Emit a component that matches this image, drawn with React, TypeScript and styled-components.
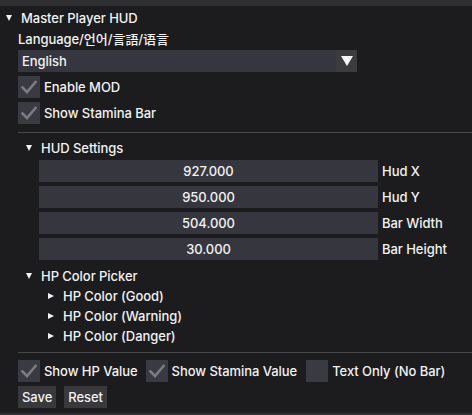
import React from 'react';
import styled, { createGlobalStyle } from 'styled-components';

const GlobalStyle = createGlobalStyle`
    html, body {
        margin: 0;
        padding: 0;
        background: #1c1c1e;
    }
    body {
        font-family: Inter, "Noto Sans CJK KR", "Noto Sans CJK JP", "Noto Sans CJK SC", sans-serif;
        font-size: 13px;
        font-weight: 500;
        letter-spacing: -0.05px;
        color: #f2f2f2;
    }
`;

const Window = styled.div`
    width: 472px;
    height: 415px;
    background: #1c1c1e;
    overflow: hidden;
    display: flex;
    flex-direction: column;
`;

const Strip = styled.div<{ $top?: boolean }>`
    height: ${p => (p.$top ? 6 : 3)}px;
    margin-top: ${p => (p.$top ? 0 : 5)}px;
    background: #2f2f32;
    flex-shrink: 0;
`;

const Body = styled.div`
    display: flex;
    flex-direction: column;
    padding-left: 18px;
`;

const TreeRow = styled.div<{ $indent: number; $top?: number }>`
    display: flex;
    align-items: center;
    height: 20px;
    margin-top: ${p => p.$top ?? 0}px;
    margin-left: ${p => p.$indent}px;
    gap: 9px;
    white-space: nowrap;
`;

const Arrow = styled.span<{ $open: boolean }>`
    width: 0;
    height: 0;
    flex-shrink: 0;
    ${p =>
        p.$open
            ? `border-left: 3.5px solid transparent;
               border-right: 3.5px solid transparent;
               border-top: 6px solid #f2f2f2;`
            : `border-top: 3.5px solid transparent;
               border-bottom: 3.5px solid transparent;
               border-left: 6px solid #f2f2f2;`}
`;

const TextLine = styled.div<{ $top?: number }>`
    height: 18px;
    line-height: 18px;
    margin-top: ${p => p.$top ?? 0}px;
    white-space: nowrap;
`;

const Combo = styled.div`
    width: 339px;
    height: 22px;
    margin-top: 2px;
    display: flex;
    background: #363640;
`;

const ComboText = styled.div`
    flex: 1;
    padding-left: 4px;
    line-height: 22px;
`;

const ComboButton = styled.div`
    width: 21px;
    display: flex;
    align-items: center;
    justify-content: center;
    background: #3c3c3f;
`;

const ComboArrow = styled.span`
    width: 0;
    height: 0;
    border-left: 6px solid transparent;
    border-right: 6px solid transparent;
    border-top: 10px solid #f5f5f5;
`;

const CheckRow = styled.div<{ $top: number }>`
    display: flex;
    align-items: center;
    margin-top: ${p => p.$top}px;
    height: 22px;
`;

const CheckItem = styled.div<{ $gapAfter?: number }>`
    display: flex;
    align-items: center;
    gap: 4px;
    margin-right: ${p => p.$gapAfter ?? 0}px;
    white-space: nowrap;
`;

const Box = styled.div`
    width: 22px;
    height: 22px;
    background: #3a3a42;
    display: flex;
    align-items: center;
    justify-content: center;
`;

const Separator = styled.div<{ $top: number }>`
    height: 1px;
    margin-top: ${p => p.$top}px;
    background: #48484b;
`;

const InputRow = styled.div<{ $top: number }>`
    display: flex;
    align-items: center;
    gap: 4px;
    margin-top: ${p => p.$top}px;
    margin-left: 21px;
    height: 22px;
`;

const NumberField = styled.div`
    width: 339px;
    height: 22px;
    line-height: 22px;
    text-align: center;
    background: #36363f;
`;

const ButtonRow = styled.div`
    display: flex;
    gap: 8px;
    margin-top: 4px;
`;

const Button = styled.div`
    height: 22px;
    line-height: 22px;
    padding: 0 4px;
    background: #38383d;
`;

const Check = () => (
    <svg width="22" height="22" viewBox="0 0 22 22">
        <path d="M4.5 11.5 L9 16 L17.5 6" fill="none" stroke="#7c7c82" strokeWidth="2.6" strokeLinecap="square" />
    </svg>
);

const Checkbox = ({ label, checked, gapAfter }: { label: string; checked: boolean; gapAfter?: number }) => (
    <CheckItem $gapAfter={gapAfter}>
        <Box>{checked && <Check />}</Box>
        <span>{label}</span>
    </CheckItem>
);

const fields = [
    { value: '927.000', label: 'Hud X' },
    { value: '950.000', label: 'Hud Y' },
    { value: '504.000', label: 'Bar Width' },
    { value: '30.000', label: 'Bar Height' },
];

const colors = ['HP Color (Good)', 'HP Color (Warning)', 'HP Color (Danger)'];

export default function App() {
    return (
        <>
            <GlobalStyle />
            <Window>
                <Strip $top />
                <Body>
                    <TreeRow $indent={-12} $top={2}>
                        <Arrow $open />
                        <span>Master Player HUD</span>
                    </TreeRow>
                    <TextLine $top={2}>Language/언어/言語/语言</TextLine>
                    <Combo>
                        <ComboText>English</ComboText>
                        <ComboButton>
                            <ComboArrow />
                        </ComboButton>
                    </Combo>
                    <CheckRow $top={4}>
                        <Checkbox label="Enable MOD" checked />
                    </CheckRow>
                    <CheckRow $top={4}>
                        <Checkbox label="Show Stamina Bar" checked />
                    </CheckRow>
                    <Separator $top={8} />
                    <TreeRow $indent={8} $top={5}>
                        <Arrow $open />
                        <span>HUD Settings</span>
                    </TreeRow>
                    {fields.map((f, i) => (
                        <InputRow key={f.label} $top={i === 0 ? 2 : 4}>
                            <NumberField>{f.value}</NumberField>
                            <span>{f.label}</span>
                        </InputRow>
                    ))}
                    <TreeRow $indent={8} $top={6}>
                        <Arrow $open />
                        <span>HP Color Picker</span>
                    </TreeRow>
                    {colors.map(c => (
                        <TreeRow key={c} $indent={30}>
                            <Arrow $open={false} />
                            <span>{c}</span>
                        </TreeRow>
                    ))}
                    <Separator $top={6} />
                    <CheckRow $top={7}>
                        <Checkbox label="Show HP Value" checked gapAfter={8} />
                        <Checkbox label="Show Stamina Value" checked gapAfter={9} />
                        <Checkbox label="Text Only (No Bar)" checked={false} />
                    </CheckRow>
                    <ButtonRow>
                        <Button>Save</Button>
                        <Button>Reset</Button>
                    </ButtonRow>
                </Body>
                <Strip />
            </Window>
        </>
    );
}
